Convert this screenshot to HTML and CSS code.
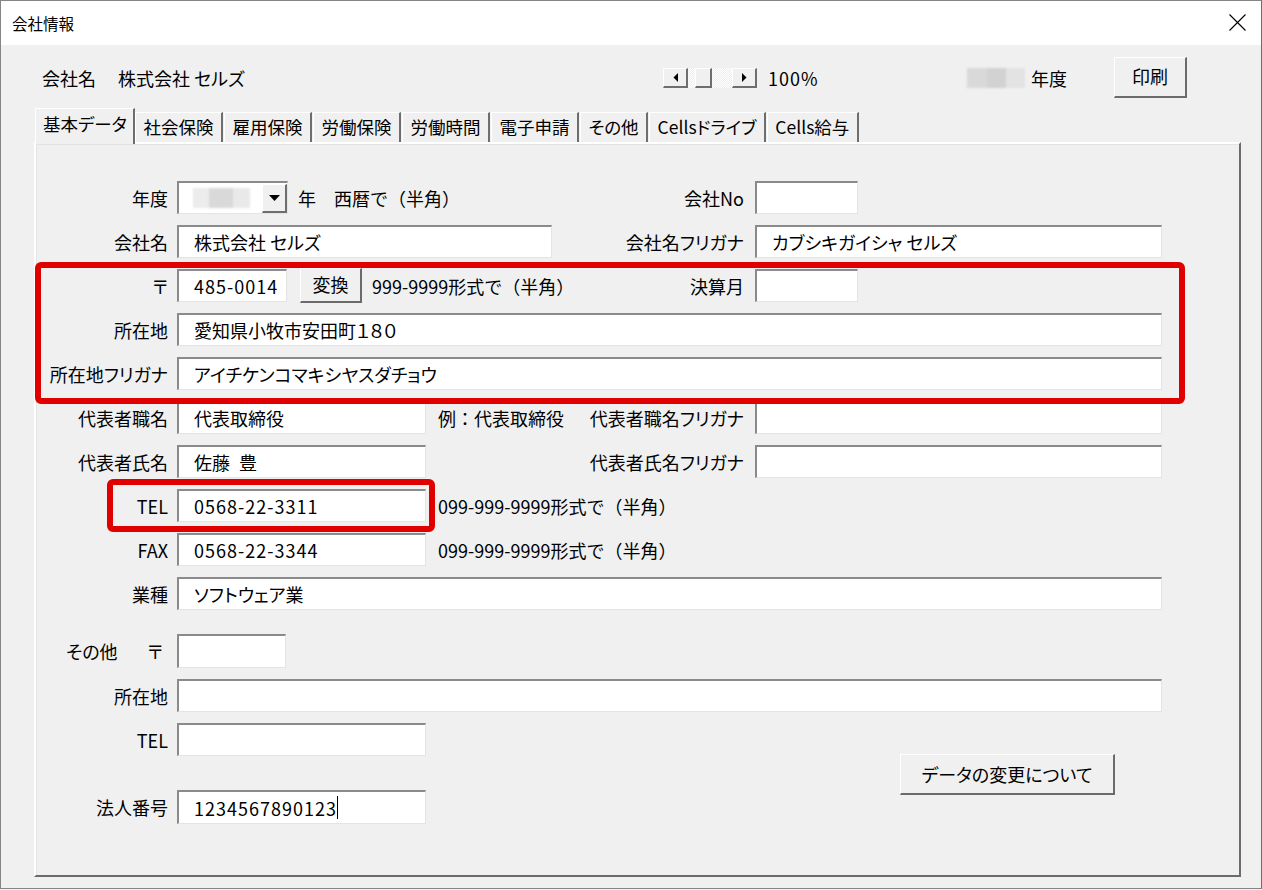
FILE: index.html
```html
<!DOCTYPE html>
<html lang="ja">
<head>
  <meta charset="UTF-8">
  <meta name="viewport" content="width=device-width, initial-scale=1.0">
  <title>会社情報</title>
  <link rel="stylesheet" href="styles.css">
</head>
<body>
  <div class="window">
    <div class="titlebar">
      <span class="title">会社情報</span>
      <svg class="close" width="17" height="17" viewBox="0 0 17 17">
        <path d="M0.5 0.5L16.5 16.5M16.5 0.5L0.5 16.5" stroke="#000" stroke-width="1.1" fill="none"/>
      </svg>
    </div>

    <div class="client">
      <!-- header: company, zoom bar, year, print -->
      <div class="header">
        <div class="company"><span>会社名</span><span class="company-name">株式会社 セルズ</span></div>
        <div class="scroll">
          <span class="sbtn"><svg width="5" height="9" viewBox="0 0 5 9"><polygon points="5,0 5,9 0.5,4.5" fill="#000"/></svg></span>
          <span class="track"><span class="thumb"></span></span>
          <span class="sbtn"><svg width="5" height="9" viewBox="0 0 5 9"><polygon points="0,0 0,9 4.5,4.5" fill="#000"/></svg></span>
        </div>
        <div class="zoom num">100%</div>
        <div class="blur blur-year"></div>
        <div class="year-label">年度</div>
        <button class="btn btn-print">印刷</button>
      </div>

      <div class="tabs">
        <div class="tab active">基本データ</div>
        <div class="tab">社会保険</div>
        <div class="tab">雇用保険</div>
        <div class="tab">労働保険</div>
        <div class="tab">労働時間</div>
        <div class="tab">電子申請</div>
        <div class="tab">その他</div>
        <div class="tab">Cellsドライブ</div>
        <div class="tab">Cells給与</div>
      </div>

      <div class="panel">
        <div class="form">
          <div class="lab">年度</div>
          <div class="cell">
            <div class="field combo w-combo">
              <div class="blur blur-combo"></div>
              <span class="drop"><svg width="11" height="6" viewBox="0 0 11 6"><polygon points="0,0 11,0 5.5,6" fill="#000"/></svg></span>
            </div>
            <span class="note note-year">年&ensp;&ensp;西暦で（半角）</span>
          </div>
          <div class="rlab">会社No</div>
          <div class="cell"><div class="field w-short"></div></div>

          <div class="lab">会社名</div>
          <div class="cell"><div class="field w-name">株式会社 セルズ</div></div>
          <div class="rlab">会社名フリガナ</div>
          <div class="field">カブシキガイシャ セルズ</div>

          <div class="lab">〒</div>
          <div class="cell">
            <div class="field w-zip num">485-0014</div>
            <button class="btn btn-convert">変換</button>
            <span class="note note-zip">999-9999形式で（半角）</span>
          </div>
          <div class="rlab">決算月</div>
          <div class="cell"><div class="field w-short"></div></div>

          <div class="lab">所在地</div>
          <div class="field wide">愛知県小牧市安田町１８０</div>

          <div class="lab">所在地フリガナ</div>
          <div class="field wide">アイチケンコマキシヤスダチョウ</div>

          <div class="lab">代表者職名</div>
          <div class="cell">
            <div class="field w-mid">代表取締役</div>
            <span class="note">例：代表取締役</span>
          </div>
          <div class="rlab">代表者職名フリガナ</div>
          <div class="field"></div>

          <div class="lab">代表者氏名</div>
          <div class="cell"><div class="field w-mid">佐藤&ensp;豊</div></div>
          <div class="rlab">代表者氏名フリガナ</div>
          <div class="field"></div>

          <div class="lab">TEL</div>
          <div class="cell span-note">
            <div class="field w-mid num">0568-22-3311</div>
            <span class="note">099-999-9999形式で（半角）</span>
          </div>

          <div class="lab">FAX</div>
          <div class="cell span-note">
            <div class="field w-mid num">0568-22-3344</div>
            <span class="note">099-999-9999形式で（半角）</span>
          </div>

          <div class="lab">業種</div>
          <div class="field wide">ソフトウェア業</div>
        </div>

        <!-- secondary address block -->
        <div class="form form-other">
          <div class="lab lab-other"><span>その他</span><span>〒</span></div>
          <div class="cell"><div class="field w-zip2 tall"></div></div>

          <div class="lab">所在地</div>
          <div class="field wide"></div>

          <div class="lab">TEL</div>
          <div class="cell"><div class="field w-mid"></div></div>

          <button class="btn btn-change">データの変更について</button>

          <div class="lab row-corp">法人番号</div>
          <div class="cell row-corp"><div class="field w-mid tall num">1234567890123<span class="caret"></span></div></div>
        </div>

        <div class="mark mark-address"></div>
        <div class="mark mark-tel"></div>
      </div>
    </div>
  </div>
</body>
</html>
```

FILE: styles.css
```css
/* Window shell */
body {
  margin: 0;
  font-family: "Noto Sans CJK JP", "Noto Sans", sans-serif;
  font-size: 18px;
  font-feature-settings: "palt";
  color: #000;
  background: #f0f0f0;
}

.window {
  width: 1262px;
  height: 889px;
  box-sizing: border-box;
  border: 1px solid #858585;
  border-right-color: #6e6e6e;
  background: #f0f0f0;
  display: flex;
  flex-direction: column;
}

.titlebar {
  height: 44px;
  flex: none;
  background: #fff;
  display: flex;
  align-items: center;
  justify-content: space-between;
  padding: 0 15px 0 11px;
}

.title {
  font-size: 15.5px;
  margin-top: -1px;
}

.close {
  margin-top: -1px;
}

.client {
  flex: 1;
  padding-left: 33px;
}

/* digits are set a touch wider */
.num {
  letter-spacing: 1px;
}

/* Header row */
.header {
  display: flex;
  align-items: center;
  height: 41px;
  margin-top: 12px;
}

.company {
  width: 629px;
  padding-left: 8px;
  box-sizing: border-box;
  white-space: nowrap;
}

.company-name {
  margin-left: 22px;
}

.scroll {
  display: flex;
  height: 20px;
  width: 94px;
}

.sbtn {
  width: 25px;
  box-sizing: border-box;
  display: flex;
  align-items: center;
  justify-content: center;
  background: #f0f0f0;
  border-style: solid;
  border-width: 1px 2px 2px 1px;
  border-color: #fff #6e6e6e #6e6e6e #fff;
}

.track {
  flex: 1;
  display: flex;
  background-color: #fafafa;
  background-image: conic-gradient(#eeeeee 25%, #fff 0 50%, #eeeeee 0 75%, #fff 0);
  background-size: 2px 2px;
}

.thumb {
  width: 17px;
  margin-left: 7px;
  box-sizing: border-box;
  background: #f0f0f0;
  border-style: solid;
  border-width: 1px 2px 2px 1px;
  border-color: #fff #6e6e6e #6e6e6e #fff;
}

.zoom {
  width: 199px;
  margin-left: 11px;
}

.blur {
  filter: blur(1px);
}

.blur-year {
  width: 58px;
  height: 20px;
  margin-top: 1px;
  background: linear-gradient(to right, #d9d9d9 0 34%, #d2d2d2 34% 68%, #e3e3e3 68%);
}

.year-label {
  margin-left: 6px;
  width: 83px;
}

.btn {
  flex: none;
  font: inherit;
  font-feature-settings: "palt";
  color: #000;
  background: #f0f0f0;
  border-style: solid;
  border-width: 1px 2px 2px 1px;
  border-color: #fff #6b6b6b #6b6b6b #fff;
  padding: 0;
  box-sizing: border-box;
}

.btn-print {
  width: 73px;
  height: 41px;
  padding-bottom: 2px;
}

/* Tabs */
.tabs {
  display: flex;
  align-items: flex-end;
  height: 34px;
  margin-top: 10px;
  padding-left: 1px;
}

.tab {
  height: 30px;
  box-sizing: border-box;
  padding: 0 7.5px 2px 7.5px;
  display: flex;
  align-items: center;
  white-space: nowrap;
  font-size: 17.5px;
  background: #f0f0f0;
  border-style: solid;
  border-width: 1px 2px 0 1px;
  border-color: #fff #6e6e6e #fff #fff;
  margin-right: 1px;
}

.tab.active {
  height: 36px;
  margin-bottom: -2px;
  padding: 0 6px 6px 7px;
  position: relative;
  z-index: 1;
  margin-right: 0;
}

/* Tab page */
.panel {
  position: relative;
  width: 1207px;
  height: 735px;
  box-sizing: border-box;
  border-style: solid;
  border-width: 2px;
  border-color: #fff #6b6b6b #6b6b6b #fff;
  box-shadow: inset 1px 1px 0 #e3e3e3;
  padding: 37px 0 0 4px;
}

.form {
  display: grid;
  grid-template-columns: 137px 390px 188px 407px;
  grid-auto-rows: 33px;
  row-gap: 11px;
}

.form-other {
  margin-top: 24px;
  grid-template-rows: 34px 33px 33px 12px 34px;
}

.lab,
.rlab {
  display: flex;
  align-items: center;
  justify-content: flex-end;
  white-space: nowrap;
}

.lab {
  grid-column: 1;
  padding-right: 9px;
}

.rlab {
  grid-column: 3;
  padding-right: 11px;
}

.lab-other {
  justify-content: space-between;
  padding-left: 26px;
  padding-right: 14px;
}

.cell {
  display: flex;
  align-items: center;
  white-space: nowrap;
}

.span-note {
  grid-column: 2 / 5;
}

.row-corp {
  grid-row: 5;
}

.field {
  flex: none;
  height: 33px;
  box-sizing: border-box;
  background: #fff;
  border-style: solid;
  border-width: 2px 1px 1px 2px;
  border-color: #8a8a8a #e4e4e4 #e4e4e4 #8a8a8a;
  padding-left: 15px;
  display: flex;
  align-items: center;
  white-space: nowrap;
}

.field.tall {
  height: 34px;
}

.field.wide {
  grid-column: 2 / 5;
}

.w-combo { width: 111px; }
.w-short { width: 103px; }
.w-name  { width: 375px; }
.w-zip   { width: 110px; }
.w-zip2  { width: 109px; }
.w-mid   { width: 249px; }

.combo {
  padding: 0;
  justify-content: space-between;
}

.blur-combo {
  width: 57px;
  height: 20px;
  margin-left: 14px;
  background: linear-gradient(to right, #ececec 0 28%, #d9d9d9 28% 70%, #e9e9e9 70%);
}

.drop {
  width: 25px;
  height: 29px;
  box-sizing: border-box;
  display: flex;
  align-items: center;
  justify-content: center;
  background: #f0f0f0;
  border-style: solid;
  border-width: 1px 2px 2px 1px;
  border-color: #fff #6e6e6e #6e6e6e #fff;
}

.note {
  margin-left: 12px;
  font-feature-settings: normal;
}

.note-year {
  margin-left: 10px;
}

.note-zip {
  margin-left: 10px;
}

.btn-convert {
  width: 62px;
  height: 35px;
  margin-left: 13px;
  padding-bottom: 3px;
}

.btn-change {
  grid-column: 4;
  grid-row: 3 / 6;
  align-self: start;
  justify-self: start;
  width: 215px;
  height: 41px;
  margin: 31px 0 0 145px;
}

.caret {
  width: 0;
  height: 23px;
  border-left: 1px solid #000;
}

/* Red highlight frames */
.mark {
  position: absolute;
  box-sizing: border-box;
  border: 6px solid #e00000;
  border-radius: 6px;
}

.mark-address {
  left: -1px;
  top: 118px;
  width: 1150px;
  height: 142px;
}

.mark-tel {
  left: 71px;
  top: 335px;
  width: 328px;
  height: 53px;
}
```
